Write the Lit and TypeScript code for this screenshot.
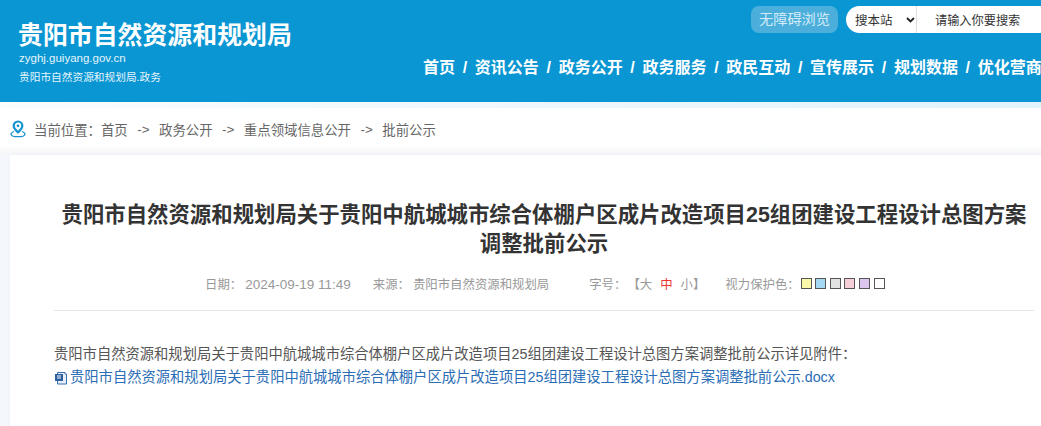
import { LitElement, html, css } from "lit";
import { customElement } from "lit/decorators.js";

const TITLE = "贵阳市自然资源和规划局关于贵阳中航城城市综合体棚户区成片改造项目25组团建设工程设计总图方案调整批前公示";
const NAV = ["首页", "资讯公告", "政务公开", "政务服务", "政民互动", "宣传展示", "规划数据", "优化营商环境"];
const CRUMBS = ["政务公开", "重点领域信息公开", "批前公示"];
const SWATCHES = ["#faf7a8", "#a5d8f3", "#e2e2e2", "#f7cfd8", "#dcc6f0", "#ffffff"];

@customElement("app-root")
export class AppRoot extends LitElement {
  static styles = css`
    :host {
      display: block;
      width: 1041px;
      height: 426px;
      overflow: hidden;
      background: #f4f7fc;
      font-family: "Liberation Sans", "Noto Sans CJK SC", sans-serif;
      color: #666;
    }
    .header {
      height: 102px;
      background: #0a96d3;
      color: #fff;
      display: flex;
      padding-left: 18px;
      overflow: hidden;
    }
    .brand {
      flex: none;
      width: 405px;
      padding-top: 20px;
    }
    .brand h1 {
      margin: 0;
      font-size: 24.9px;
      line-height: 30px;
      font-weight: 700;
      white-space: nowrap;
    }
    .domain {
      font-size: 11.5px;
      line-height: 14px;
      margin: 1px 0 0 1px;
      color: #e6f5fc;
    }
    .slogan {
      font-size: 10.7px;
      line-height: 16px;
      margin: 4px 0 0 1px;
      color: #e6f5fc;
      white-space: nowrap;
    }
    .right {
      flex: none;
      width: 618px;
      padding-top: 6px;
    }
    .tools {
      display: flex;
      align-items: center;
      margin-left: 328px;
    }
    .access {
      flex: none;
      width: 87px;
      height: 27px;
      border-radius: 8px;
      background: #4baedb;
      color: #d3ecf8;
      font-size: 14.2px;
      line-height: 27px;
      text-align: center;
    }
    .search {
      margin-left: 8px;
      flex: none;
      width: 195px;
      height: 27px;
      border-radius: 14px 0 0 14px;
      background: #fff;
      display: flex;
      align-items: center;
      font-size: 12.2px;
      color: #333;
    }
    .scope {
      width: 71px;
      height: 27px;
      flex: none;
      padding-left: 9px;
      box-sizing: border-box;
      border-right: 1px solid #e0e0e0;
      display: flex;
      align-items: center;
      gap: 13px;
      font-size: 12.5px;
    }
    .query {
      padding-left: 18px;
      white-space: nowrap;
    }
    .nav {
      display: flex;
      margin-top: 23px;
      font-size: 16px;
      line-height: 24px;
      font-weight: 700;
      white-space: nowrap;
    }
    .sep {
      width: 19.8px;
      text-align: center;
      flex: none;
      font-weight: 700;
    }
    .crumbs {
      height: 53px;
      display: flex;
      align-items: center;
      padding: 1px 0 0 10px;
      box-sizing: border-box;
      font-size: 13.4px;
      color: #666;
      white-space: nowrap;
      background:
        linear-gradient(90deg, #fafdfe, #e1f3fc) top / 100% 6px no-repeat,
        linear-gradient(180deg, #fff 82%, #f3f5f8);
    }
    .crumbs svg {
      margin-right: 8px;
      flex: none;
    }
    .arrow {
      margin: 0 9.5px;
    }
    .card {
      margin-left: 10px;
      height: 271px;
      background: #fff;
      padding: 46px 0 0 44px;
      box-sizing: border-box;
      box-shadow: 0 0 6px rgba(0, 0, 0, 0.03);
    }
    .card h2 {
      margin: 0;
      width: 980px;
      font-size: 21.4px;
      line-height: 29px;
      font-weight: 700;
      color: #333;
      text-align: center;
    }
    .meta {
      width: 980px;
      height: 44px;
      margin-top: 8px;
      box-sizing: border-box;
      border-bottom: 1px solid #e6e6e6;
      padding: 10px 0 0 151px;
      display: flex;
      align-items: flex-start;
      font-size: 12.4px;
      line-height: 16px;
      color: #999;
      white-space: nowrap;
    }
    .meta .src { margin-left: 22px; }
    .meta .size { margin-left: 40px; }
    .meta .eye { margin-left: 20px; }
    .gap { margin-left: 3px; }
    .gap-tight { margin-left: 1px; }
    .date { margin-left: 3px; font-size: 13.5px; }
    .red { color: #e33; margin: 0 8px; }
    .swatches {
      display: flex;
      gap: 3.6px;
      margin-top: 1px;
      margin-left: 1px;
    }
    .swatch {
      width: 11px;
      height: 11px;
      box-sizing: border-box;
      border: 1px solid #555;
    }
    .body {
      margin-top: 32px;
      font-size: 14.3px;
      line-height: 23px;
      color: #555;
      white-space: nowrap;
    }
    .link {
      display: flex;
      align-items: center;
      color: #2b6db5;
    }
    .link svg {
      flex: none;
      margin-right: 2px;
    }
  `;

  render() {
    return html`
      <div class="header">
        <div class="brand">
          <h1>贵阳市自然资源和规划局</h1>
          <div class="domain">zyghj.guiyang.gov.cn</div>
          <div class="slogan">贵阳市自然资源和规划局.政务</div>
        </div>
        <div class="right">
          <div class="tools">
            <div class="access">无障碍浏览</div>
            <div class="search">
              <div class="scope">
                <span>搜本站</span>
                <svg width="9" height="6" viewBox="0 0 9 6">
                  <path d="M1 1l3.5 3.5L8 1" fill="none" stroke="#222" stroke-width="1.8" />
                </svg>
              </div>
              <div class="query">请输入你要搜索</div>
            </div>
          </div>
          <nav class="nav">
            ${NAV.map(
              (n, i) => html`${i ? html`<span class="sep">/</span>` : ""}<span>${n}</span>`
            )}
          </nav>
        </div>
      </div>
      <div class="crumbs">
        <svg width="16" height="18" viewBox="0 0 16 18">
          <path d="M8 1.5a4.3 4.3 0 0 1 4.3 4.3C12.3 8.6 8 12.4 8 12.4S3.7 8.6 3.7 5.8A4.3 4.3 0 0 1 8 1.5z" fill="none" stroke="#1593cf" stroke-width="2.2" />
          <circle cx="8" cy="5.8" r="1.4" fill="#1593cf" />
          <path d="M4 11.5C2 12.2 1 13.2 1 14.2c0 1.6 3.1 2.5 7 2.5s7-.9 7-2.5c0-1-1-2-3-2.7" fill="none" stroke="#1593cf" stroke-width="1.2" />
        </svg>
        <span>当前位置：</span><span>首页</span>
        ${CRUMBS.map((c) => html`<span class="arrow">-&gt;</span><span>${c}</span>`)}
      </div>
      <div class="card">
        <h2>${TITLE}</h2>
        <div class="meta">
          <span>日期：</span><span class="date">2024-09-19 11:49</span>
          <span class="src">来源：</span><span class="gap">贵阳市自然资源和规划局</span>
          <span class="size">字号：</span><span class="gap-tight">【大</span><span class="red">中</span><span>小】</span>
          <span class="eye">视力保护色：</span>
          <span class="swatches">
            ${SWATCHES.map((c) => html`<span class="swatch" style="background:${c}"></span>`)}
          </span>
        </div>
        <div class="body">
          <div>${TITLE}详见附件：</div>
          <div class="link">
            <svg width="14" height="14" viewBox="0 0 14 14">
              <path d="M3.5 1.5H11V3h1.5v10h-9z" fill="#e8eef7" stroke="#3c6fae" />
              <rect x="1" y="3" width="8" height="7" fill="#2d5f9e" />
              <path d="M3 5h4M3 7h4" stroke="#fff" />
            </svg>
            <span>${TITLE}.docx</span>
          </div>
        </div>
      </div>
    `;
  }
}
